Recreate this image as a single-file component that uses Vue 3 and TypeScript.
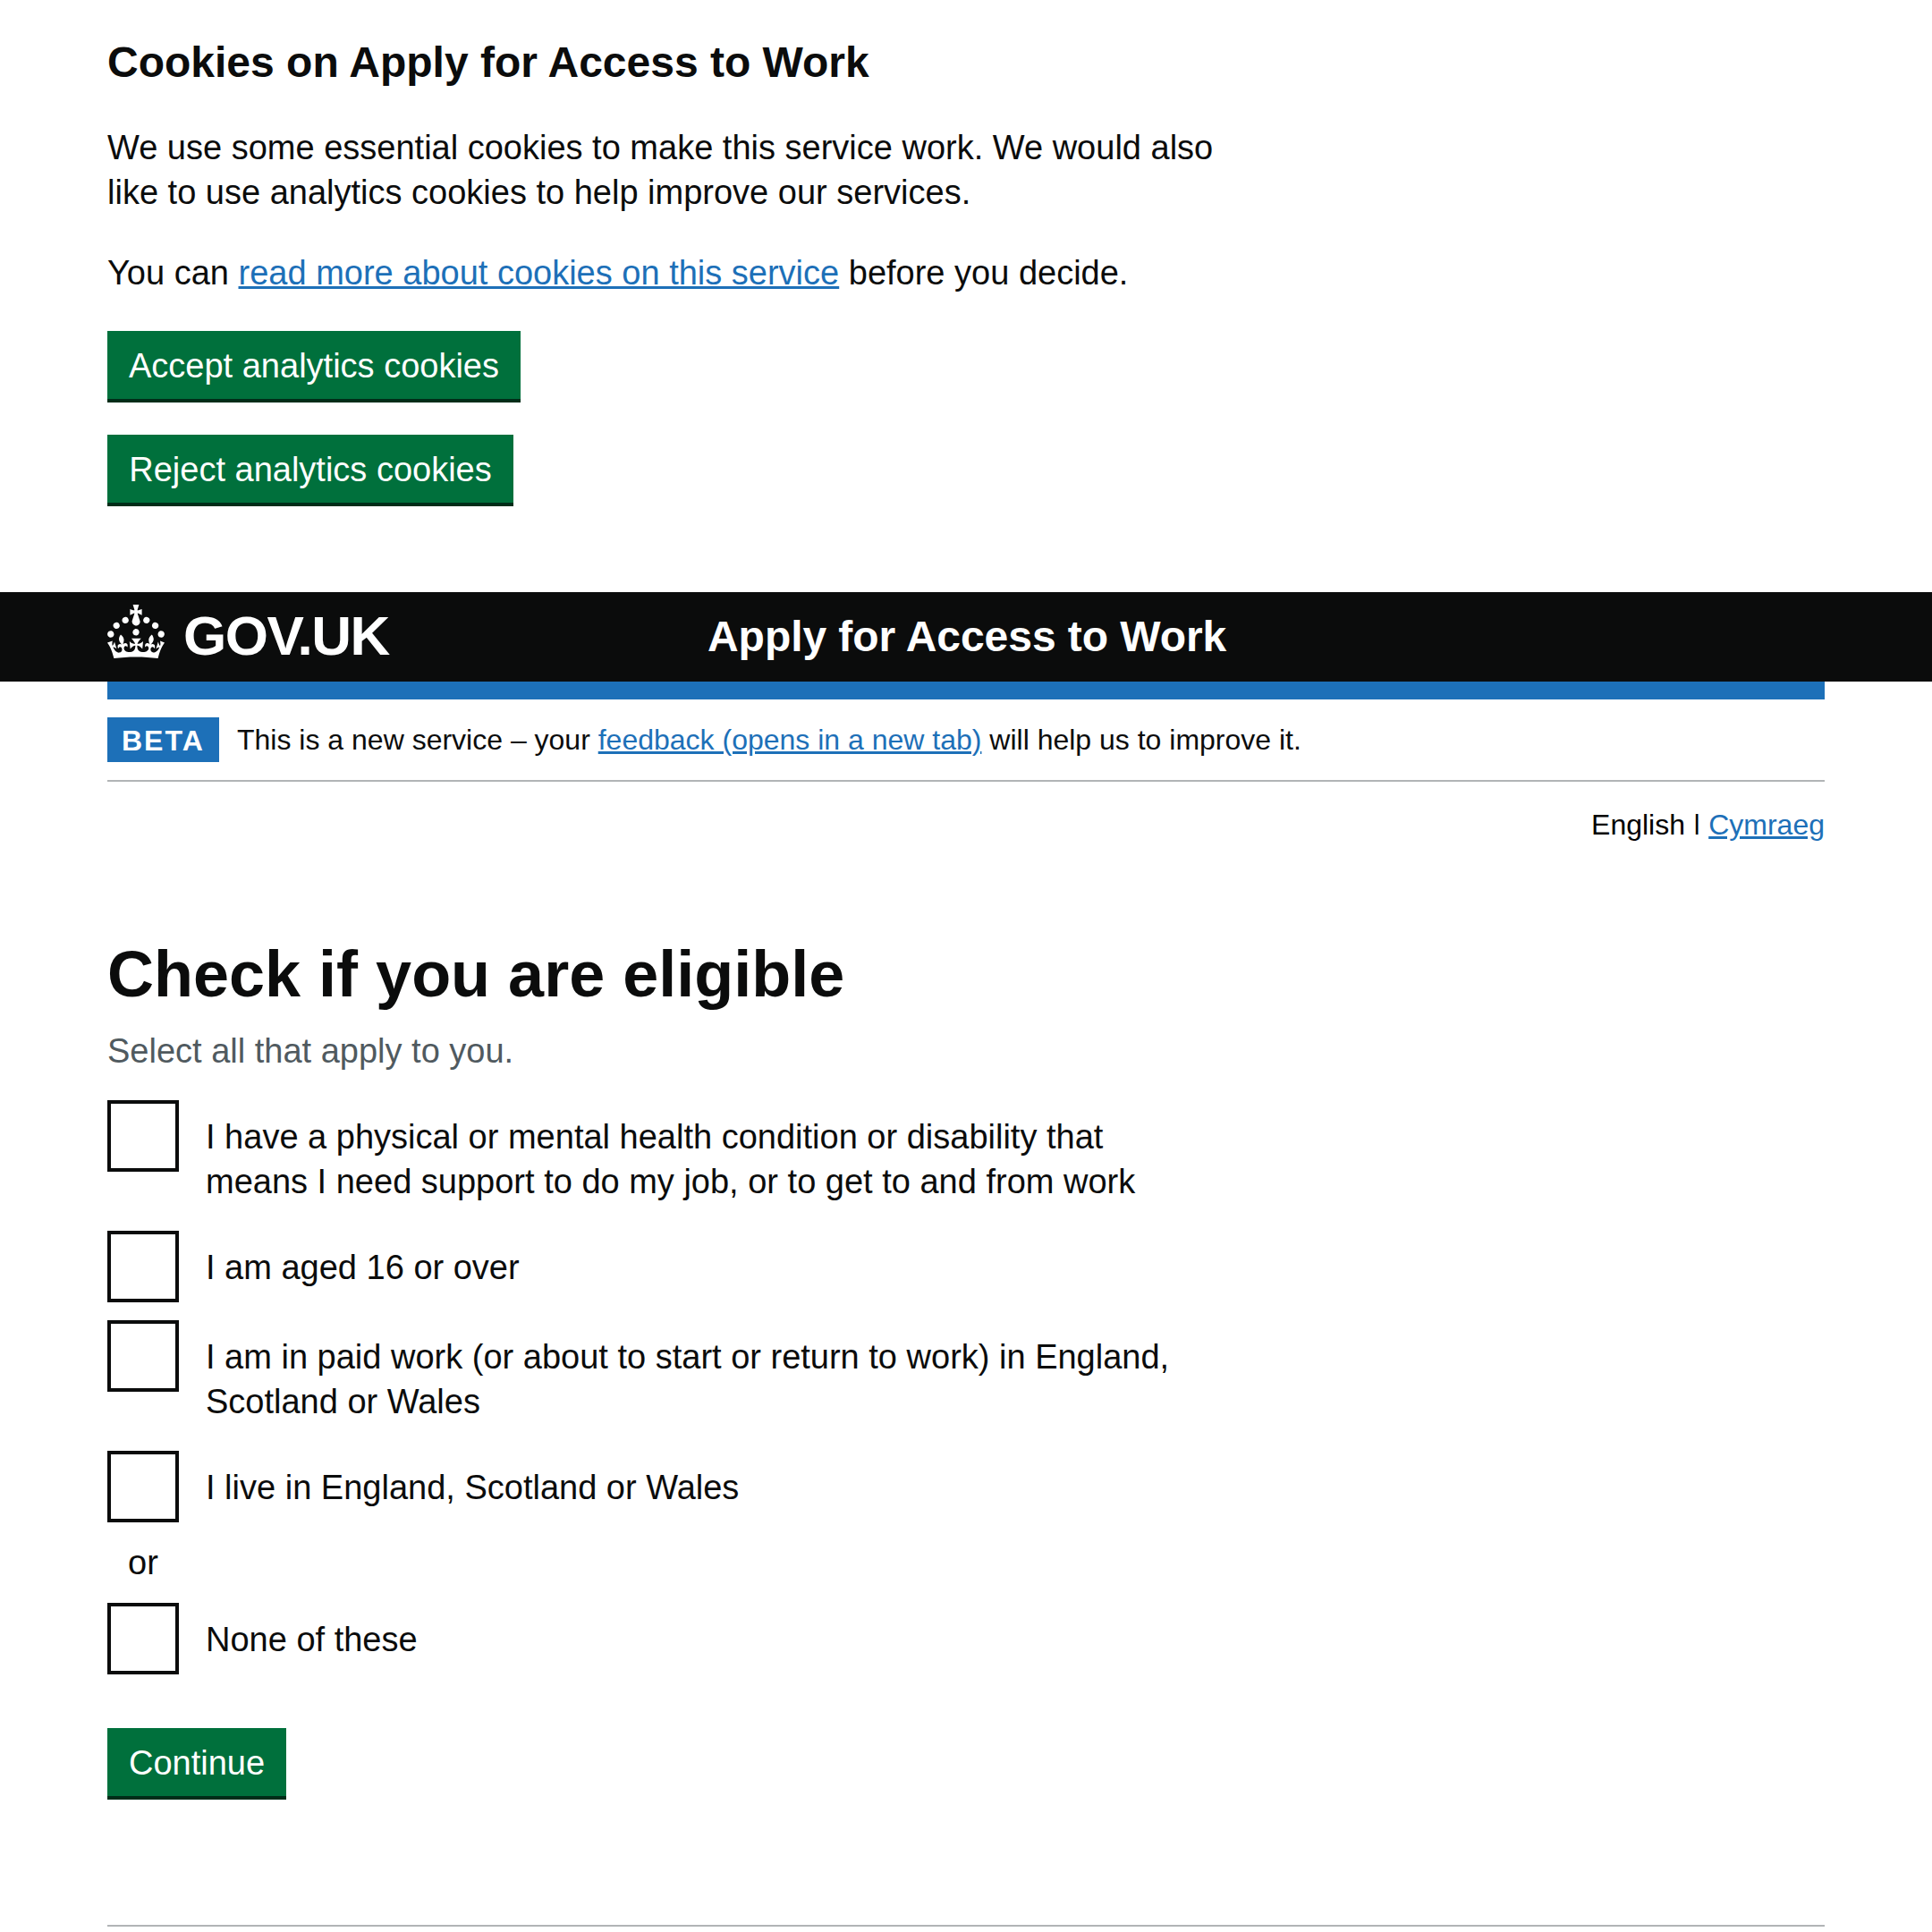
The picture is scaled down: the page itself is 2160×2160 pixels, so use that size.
<script setup lang="ts">
interface Option {
  id: string
  lines: string[]
}

const options: Option[] = [
  {
    id: 'condition',
    lines: [
      'I have a physical or mental health condition or disability that',
      'means I need support to do my job, or to get to and from work',
    ],
  },
  { id: 'age', lines: ['I am aged 16 or over'] },
  {
    id: 'work',
    lines: ['I am in paid work (or about to start or return to work) in England,', 'Scotland or Wales'],
  },
  { id: 'live', lines: ['I live in England, Scotland or Wales'] },
]
</script>

<template>
  <div class="page">
    <section class="cookies container">
      <h2>Cookies on Apply for Access to Work</h2>
      <p>
        We use some essential cookies to make this service work. We would also<br />
        like to use analytics cookies to help improve our services.
      </p>
      <p>You can <a href="#" class="noskip">read more about cookies on this service</a> before you decide.</p>
      <div class="cookie-buttons">
        <button class="btn accept" type="button">Accept analytics cookies</button>
        <button class="btn reject" type="button">Reject analytics cookies</button>
      </div>
    </section>

    <header class="header">
      <div class="container header-row">
        <div class="brand">
          <svg class="crown" viewBox="0 0 32 30" width="64" height="60" fill="#fff" aria-hidden="true">
            <path
              fill-rule="evenodd"
              d="M22.6 10.4c-1 .4-2-.1-2.4-1-.4-.9.1-2 1-2.4.9-.4 2 .1 2.4 1s-.1 2-1 2.4m-5.9 6.7c-.9.4-2-.1-2.4-1-.4-.9.1-2 1-2.4.9-.4 2 .1 2.4 1s-.1 2-1 2.4m10.8-3.7c-1 .4-2-.1-2.4-1-.4-.9.1-2 1-2.4.9-.4 2 .1 2.4 1s0 2-1 2.4m3.3 4.8c-1 .4-2-.1-2.4-1-.4-.9.1-2 1-2.4.9-.4 2 .1 2.4 1s-.1 2-1 2.4M17 4.7l2.3 1.2V2.5l-2.3.7-.2-.2.9-3h-3.4l.9 3-.2.2c-.1.1-2.3-.7-2.3-.7v3.4L15 4.7c.1.1.1.2.2.2l-1.3 4c-.1.2-.1.4-.1.6 0 1.1.8 2 1.9 2.2h.7c1-.2 1.9-1.1 1.9-2.1 0-.2 0-.4-.1-.6l-1.3-4c-.1-.2 0-.2.1-.3m-7.6 5.7c.9.4 2-.1 2.4-1 .4-.9-.1-2-1-2.4-.9-.4-2 .1-2.4 1s0 2 1 2.4m-5 3c.9.4 2-.1 2.4-1 .4-.9-.1-2-1-2.4-.9-.4-2 .1-2.4 1s.1 2 1 2.4m-3.2 4.8c.9.4 2-.1 2.4-1 .4-.9-.1-2-1-2.4-.9-.4-2 .1-2.4 1s0 2 1 2.4m14.8 11c4.4 0 8.6.3 12.3.8 1.1-4.5 2.4-7 3.7-8.8l-2.5-.9c.2 1.3.3 1.9 0 2.7-.4-.4-.8-1.1-1.1-2.3l-1.2 4c.7-.5 1.3-.8 2-.9-1.1 2.5-2.6 3.1-3.5 3-1.1-.2-1.7-1.2-1.5-2.1.3-1.2 1.5-1.5 2.1-.1 1.1-2.3-.8-3-2-2.3 1.9-1.9 2.1-3.5.6-5.6-2.1 1.6-2.1 3.2-1.2 5.5-1.2-1.4-3.2-.6-2.5 1.6.9-1.4 2.1-.5 1.9.8-.2 1.1-1.7 2.1-3.5 1.9-2.7-.2-2.9-2.1-2.9-3.6.7-.1 1.9.5 2.9 1.9l.4-4.3c-1.1 1.1-2.1 1.4-3.2 1.4.4-1.2 2.1-3 2.1-3h-5.4s1.7 1.9 2.1 3c-1.1 0-2.1-.2-3.2-1.4l.4 4.3c1-1.4 2.2-2 2.9-1.9-.1 1.5-.2 3.4-2.9 3.6-1.9.2-3.4-.8-3.5-1.9-.2-1.3 1-2.2 1.9-.8.7-2.3-1.2-3-2.5-1.6.9-2.2.9-3.9-1.2-5.5-1.5 2-1.3 3.7.6 5.6-1.2-.7-3.1 0-2 2.3.6-1.4 1.8-1.1 2.1.1.2.9-.3 1.9-1.5 2.1-.9.2-2.4-.5-3.5-3 .6 0 1.2.3 2 .9l-1.2-4c-.3 1.1-.7 1.9-1.1 2.3-.3-.8-.2-1.4 0-2.7l-2.9.9C1.3 23 2.6 25.5 3.7 30c3.7-.5 7.9-.8 12.3-.8"
            />
          </svg>
          <span class="logotype">GOV.UK</span>
        </div>
        <span class="service">Apply for Access to Work</span>
      </div>
    </header>

    <div class="container">
      <div class="blue-bar"></div>
      <div class="phase">
        <strong class="tag">BETA</strong>
        <span class="phase-text">This is a new service – your <a href="#">feedback (opens in a new tab)</a> will help us to improve it.</span>
      </div>
      <nav class="lang"><span>English </span><span class="sep">|</span><a href="#">Cymraeg</a></nav>

      <main>
        <h1>Check if you are eligible</h1>
        <p class="hint">Select all that apply to you.</p>
        <div v-for="o in options" :key="o.id" class="item">
          <span class="box"></span>
          <label :class="o.id">
            <template v-for="(line, i) in o.lines" :key="i"><br v-if="i > 0" />{{ line }}</template>
          </label>
        </div>
        <div class="divider">or</div>
        <div class="item">
          <span class="box"></span>
          <label class="none">None of these</label>
        </div>
        <button class="btn continue" type="button">Continue</button>
      </main>
      <hr />
    </div>
  </div>
</template>

<style>
body {
  background: #fff;
}
</style>

<style scoped>
.page {
  height: 2160px;
  overflow: hidden;
  box-sizing: border-box;
  font-family: 'Liberation Sans', Arial, Helvetica, sans-serif;
  font-size: 38px;
  line-height: 50px;
  color: #0b0c0c;
}
.container {
  margin: 0 120px;
}
a {
  color: #1d70b8;
  text-decoration: underline;
  text-decoration-thickness: 3px;
  text-underline-offset: 2px;
}
.noskip {
  text-decoration-skip-ink: none;
}
.cookies {
  height: 662px;
  padding-top: 40px;
  box-sizing: border-box;
}
h2 {
  margin: 0 0 40px;
  font-size: 48px;
  line-height: 60px;
}
p {
  margin: 0 0 40px;
}
.cookie-buttons {
  display: flex;
  flex-direction: column;
  align-items: flex-start;
  gap: 36px;
}
.btn {
  display: block;
  height: 80px;
  padding: 0 0 2px;
  border: 0;
  box-shadow: inset 0 -4px 0 #002d18;
  background: #00703c;
  color: #fff;
  font: inherit;
  line-height: 78px;
  white-space: nowrap;
  text-align: center;
}
.accept {
  width: 462px;
}
.reject {
  width: 454px;
}
.continue {
  width: 200px;
  margin-top: 60px;
}
.header {
  background: #0b0c0c;
  color: #fff;
  height: 100px;
}
.header-row {
  display: flex;
  height: 100px;
}
.brand {
  display: flex;
  width: 671px;
  gap: 21px;
}
.crown {
  margin-top: 14px;
}
.logotype {
  font-size: 62px;
  font-weight: 700;
  line-height: 97px;
  letter-spacing: -1.5px;
}
.service {
  font-size: 48px;
  font-weight: 700;
  line-height: 100px;
  letter-spacing: -0.05px;
}
.blue-bar {
  height: 20px;
  background: #1d70b8;
}
.phase {
  display: flex;
  gap: 20px;
  padding: 20px 0;
  height: 50px;
  border-bottom: 2px solid #b1b4b6;
  font-size: 32px;
}
.tag {
  width: 125px;
  height: 50px;
  box-sizing: border-box;
  padding-left: 16px;
  background: #1d70b8;
  color: #fff;
  line-height: 52px;
  letter-spacing: 2px;
}
.lang {
  margin-top: 23px;
  height: 50px;
  text-align: right;
  font-size: 32px;
  color: #000;
  white-space: pre;
}
.sep {
  display: inline-block;
  margin-right: 9px;
  clip-path: inset(0 0 14px 0);
}
main {
  padding-top: 92px;
}
h1 {
  margin: 0 0 11px;
  font-size: 72px;
  line-height: 100px;
}
.hint {
  margin: 0 0 30px;
  color: #505a5f;
}
.item {
  display: flex;
  gap: 30px;
  margin-bottom: 20px;
}
.box {
  width: 80px;
  height: 80px;
  box-sizing: border-box;
  border: 4px solid #0b0c0c;
  flex: none;
}
.item label {
  padding: 16px 0 10px;
}
.item label:not(.condition):not(.work) {
  padding-bottom: 0;
  height: 64px;
}
.divider {
  width: 80px;
  margin-bottom: 20px;
  text-align: center;
}
hr {
  margin: 140px 0 0;
  border: 0;
  border-top: 2px solid #b1b4b6;
}
</style>
